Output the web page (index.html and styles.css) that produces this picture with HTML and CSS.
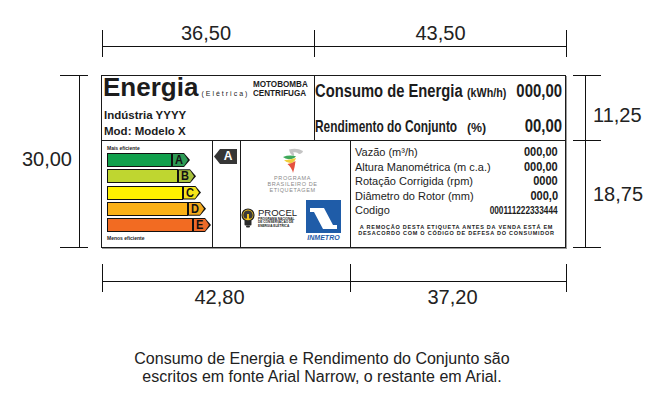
FILE: index.html
```html
<!DOCTYPE html>
<html lang="pt-BR">
<head>
<meta charset="utf-8">
<title>Etiqueta de Eficiência Energética - Motobomba</title>
<link rel="stylesheet" href="styles.css">
</head>
<body>
<div class="page">
  <div class="dim-top">
    <div class="hseg hseg-a"><div class="dim">36,50</div><div class="rule"></div></div>
    <div class="hseg hseg-b"><div class="dim">43,50</div><div class="rule"></div></div>
  </div>

  <div class="mid">
    <div class="vdim-left">
      <div class="dim">30,00</div>
      <div class="vbar"><div class="vline"></div></div>
    </div>

    <div class="etq">
      <div class="etq-top">
        <div class="etq-id">
          <div class="brand"><span class="energia">Energia</span><span class="eletrica">(Elétrica)</span><span class="tipo">MOTOBOMBA<br>CENTRIFUGA</span></div>
          <div class="idline idline-first">Indústria YYYY</div>
          <div class="idline">Mod: Modelo X</div>
        </div>
        <div class="etq-cons">
          <div class="cons-row">
            <span class="cons-lbl lbl-cons">Consumo de Energia</span>
            <span class="cons-unit unit-kwh">(kWh/h)</span>
            <span class="cons-val">000,00</span>
          </div>
          <div class="cons-row">
            <span class="cons-lbl lbl-rend">Rendimento do Conjunto</span>
            <span class="cons-unit unit-pct">(%)</span>
            <span class="cons-val">00,00</span>
          </div>
        </div>
      </div>

      <div class="etq-bot">
        <div class="bars">
          <div class="scale-note">Mais eficiente</div>
          <div class="bar"><div class="bar-body c-a" style="width:65px"></div><div class="tag"><div class="tag-in t-a"><span>A</span></div></div></div>
          <div class="bar"><div class="bar-body c-b" style="width:71px"></div><div class="tag"><div class="tag-in t-b"><span>B</span></div></div></div>
          <div class="bar"><div class="bar-body c-c" style="width:76px"></div><div class="tag"><div class="tag-in t-c"><span>C</span></div></div></div>
          <div class="bar"><div class="bar-body c-d" style="width:81px"></div><div class="tag"><div class="tag-in t-d"><span>D</span></div></div></div>
          <div class="bar"><div class="bar-body c-e" style="width:86px"></div><div class="tag"><div class="tag-in t-e"><span>E</span></div></div></div>
          <div class="scale-note scale-note-low">Menos eficiente</div>
        </div>

        <div class="aind"><div class="arrow-a">A</div></div>

        <div class="logos">
          <div class="pbe">
            <svg class="pbe-mark" width="26" height="26" viewBox="0 0 26 26">
              <path d="M9 1.5 Q17 -0.5 23 3 Q22.5 5.5 19 6 Q17 3.5 13 4.5 Q15 6.5 13.5 8 Q10 6.5 9 1.5Z" fill="#c4c4c4"/>
              <path d="M3 9 Q9 6.5 16 8.2 Q14 11 9 11.2 Q5 11 3 9Z" fill="#3ea85a"/>
              <path d="M4 12.2 Q10 11.8 16 10 Q15 14 11 15.3 Q7 15 4 12.2Z" fill="#f0cf3c"/>
              <path d="M7.5 16 Q12 15.6 15.5 13 Q15 18.5 13 25 Q12 20 7.5 16Z" fill="#e5513d"/>
            </svg>
            <div class="pbe-text">PROGRAMA<br>BRASILEIRO DE<br>ETIQUETAGEM</div>
          </div>
          <div class="seals">
            <div class="procel">
              <svg class="bulb" width="14" height="20" viewBox="0 0 14 20">
                <circle cx="7" cy="7" r="6" fill="#f4c51c" stroke="#222" stroke-width="1.2"/>
                <path d="M7 2.5 A4.5 4.5 0 0 0 4 10.5 L6 10.5 L6 6 L8 6 L8 10.5 L10 10.5 A4.5 4.5 0 0 0 7 2.5Z" fill="#3a3a3a"/>
                <rect x="3.5" y="12.5" width="7" height="5" rx="1" fill="#2a2a2a"/>
                <rect x="5" y="17.5" width="4" height="2" rx="1" fill="#2a2a2a"/>
              </svg>
              <div class="procel-txt">
                <div class="procel-name">PROCEL</div>
                <div class="procel-sub">PROGRAMA NACIONAL<br>DE CONSERVAÇÃO DE<br>ENERGIA ELÉTRICA</div>
              </div>
            </div>
            <div class="inmetro">
              <svg width="35" height="33" viewBox="0 0 35 33">
                <rect width="35" height="33" fill="#1f5ca8"/>
                <polygon points="4,8 18,8 27,25 31,25 31,29 17,29 8,12 4,12" fill="#fff"/>
              </svg>
              <div class="inmetro-text">INMETRO</div>
            </div>
          </div>
        </div>

        <div class="data">
          <div class="drow"><span>Vazão (m³/h)</span><span class="dval">000,00</span></div>
          <div class="drow"><span>Altura Manométrica (m c.a.)</span><span class="dval">000,00</span></div>
          <div class="drow"><span>Rotação Corrigida (rpm)</span><span class="dval">0000</span></div>
          <div class="drow"><span>Diâmetro do Rotor (mm)</span><span class="dval">000,0</span></div>
          <div class="drow"><span>Codigo</span><span class="dval code">000111222333444</span></div>
          <div class="notice">A REMOÇÃO DESTA ETIQUETA ANTES DA VENDA ESTÁ EM<br>DESACORDO COM O CÓDIGO DE DEFESA DO CONSUMIDOR</div>
        </div>
      </div>
    </div>

    <div class="vdim-right">
      <div class="vseg vseg-a"><div class="vtick"><div class="vline"></div></div><div class="dim">11,25</div></div>
      <div class="vseg vseg-b"><div class="vtick"><div class="vline"></div></div><div class="dim">18,75</div></div>
    </div>
  </div>

  <div class="dim-bottom">
    <div class="bseg bseg-a"><div class="rule"></div><div class="dim">42,80</div></div>
    <div class="bseg bseg-b"><div class="rule"></div><div class="dim">37,20</div></div>
  </div>

  <p class="caption">Consumo de Energia e Rendimento do Conjunto são<br>escritos em fonte Arial Narrow, o restante em Arial.</p>
</div>
</body>
</html>
```

FILE: styles.css
```css
* { box-sizing: border-box; margin: 0; padding: 0; }
html, body { width: 659px; height: 400px; background: #fff; }
body {
  font-family: "Liberation Sans", Arial, sans-serif;
  color: #1c1c1c;
  overflow: hidden;
}
.page { width: 659px; height: 400px; display: flex; flex-direction: column; }

/* dimension annotations */
.dim { font-size: 20px; line-height: 20px; color: #222; white-space: nowrap; }

.dim-top { display: flex; height: 75px; padding: 30px 0 0 102px; }
.hseg { height: 27px; border-left: 1px solid #111; display: flex; flex-direction: column; }
.hseg-a { width: 212px; }
.hseg-b { width: 253px; border-right: 1px solid #111; }
.hseg .dim { margin-top: -7px; height: 20px; text-align: center; }
.hseg-a .dim { padding-right: 5px; }
.hseg .rule { height: 4px; border-bottom: 1px solid #111; }

.mid { display: flex; height: 173px; }

.vdim-left { width: 101px; display: flex; align-items: center; flex-shrink: 0; }
.vdim-left .dim { width: 72px; text-align: right; padding-bottom: 6px; }
.vbar {
  width: 28px; align-self: stretch; margin-left: -12px;
  border-top: 1px solid #111; border-bottom: 1px solid #111;
}
.vbar .vline { width: 20px; height: 100%; border-right: 1px solid #111; }

.vdim-right { margin-left: 7px; display: flex; flex-direction: column; }
.vseg { display: flex; align-items: center; }
.vseg-a { height: 65px; }
.vseg-b { height: 108px; }
.vtick { width: 28px; align-self: stretch; border-top: 1px solid #111; padding-left: 12px; }
.vseg-b .vtick { border-bottom: 1px solid #111; }
.vtick .vline { height: 100%; border-left: 1px solid #111; }
.vseg .dim { margin-left: -8px; }
.vseg-a .dim { margin-top: 15px; }

.dim-bottom { display: flex; height: 44px; padding: 16px 0 0 102px; }
.bseg { height: 28px; border-left: 1px solid #111; }
.bseg-a { width: 248px; }
.bseg-b { width: 217px; border-right: 1px solid #111; }
.bseg .rule { height: 18px; border-bottom: 1px solid #111; }
.bseg .dim { margin-top: 4.5px; text-align: center; }
.bseg-a .dim { padding-right: 14px; }
.bseg-b .dim { padding-right: 12px; }

.caption {
  margin-top: 57.5px; padding-right: 15px;
  text-align: center; font-size: 16px; line-height: 18px; color: #222;
}

/* energy label */
.etq {
  width: 465px; height: 173px; flex-shrink: 0;
  border: 1px solid #1a1a1a; box-shadow: 1px 1px 0 #9a9a9a;
  display: flex; flex-direction: column;
}
.etq-top { height: 65px; border-bottom: 1px solid #1a1a1a; display: flex; flex-shrink: 0; }
.etq-id { width: 213px; border-right: 1px solid #1a1a1a; padding-left: 2px; }
.brand { height: 22px; line-height: 22px; white-space: nowrap; }
.energia { font-size: 26px; font-weight: 700; margin-left: -1px; }
.eletrica { font-size: 7px; letter-spacing: 2px; margin-left: 3px; }
.tipo {
  display: inline-block; margin-left: 4px;
  font-weight: 700; font-size: 9px; line-height: 9px;
  transform: scaleX(0.9); transform-origin: 0 50%;
}
.idline { font-size: 11.5px; font-weight: 700; line-height: 16px; }
.idline-first { margin-top: 9px; }

/* Arial Narrow look: Liberation Sans condensed with scaleX */
.etq-cons {
  flex: 1; padding: 5px 4px 0 0;
  display: flex; flex-direction: column; gap: 15px;
  font-weight: 700;
}
.cons-row {
  display: flex; align-items: baseline;
  height: 20px; line-height: 20px; font-size: 18px; white-space: nowrap;
}
.cons-lbl { transform-origin: 0 50%; }
.lbl-cons { width: 148px; transform: scaleX(0.82); }
.lbl-rend { width: 142px; transform: scaleX(0.7); font-size: 17px; }
.cons-unit { font-size: 12.5px; transform-origin: 0 50%; }
.unit-kwh { margin-left: 4px; width: 40px; transform: scaleX(0.86); }
.unit-pct { margin-left: 10px; width: 23px; font-size: 13px; transform: scaleX(0.95); }
.cons-val { margin-left: auto; transform: scaleX(0.83); transform-origin: 100% 50%; }

.etq-bot { flex: 1; display: flex; }

.bars { width: 111px; border-right: 1px solid #1a1a1a; padding: 3px 0 0 5px; flex-shrink: 0; }
.scale-note { font-size: 5px; font-weight: 700; line-height: 8px; height: 8px; margin-bottom: 1px; white-space: nowrap; }
.scale-note-low { margin: 1.75px 0 0; }
.bar { display: flex; height: 14px; margin-bottom: 2.25px; }
.bar:nth-last-child(2) { margin-bottom: 0; }
.bar-body { height: 14px; border: 1px solid #111; }
.c-a { background: #11a04c; }
.c-b { background: #bfd630; }
.c-c { background: #fff200; }
.c-d { background: #fbb117; }
.c-e { background: #f26b22; }
.tag {
  width: 18px; height: 14px; padding: 1px; background: #111;
  clip-path: polygon(0 0, 12px 0, 100% 50%, 12px 100%, 0 100%);
}
.tag-in {
  width: 15px; height: 12px; padding-left: 1.5px;
  clip-path: polygon(0 0, 11px 0, 100% 50%, 11px 100%, 0 100%);
  font-weight: 700; font-size: 13px; line-height: 12.5px; color: #111;
}
.tag-in span { display: inline-block; transform: scaleX(0.85); transform-origin: 0 50%; }
.t-a { background: #2f9b55; }
.t-b { background: #a9c23c; }
.t-c { background: #f6e41a; }
.t-d { background: #f4aa1e; }
.t-e { background: #ec6a2a; }

.aind { width: 28px; border-right: 1px solid #1a1a1a; padding: 8px 0 0 1px; flex-shrink: 0; }
.arrow-a {
  width: 23px; height: 15px; padding-left: 5px;
  background: #363636; color: #fff;
  clip-path: polygon(0 50%, 6px 0, 100% 0, 100% 100%, 6px 100%);
  font-weight: 700; font-size: 12px; line-height: 15px; text-align: center;
}

.logos { width: 110px; border-right: 1px solid #1a1a1a; display: flex; flex-direction: column; padding-top: 7px; flex-shrink: 0; }
.pbe { display: flex; flex-direction: column; align-items: center; padding-right: 6px; }
.pbe-mark { display: block; }
.pbe-text {
  margin-top: 1px; font-size: 5.5px; line-height: 6px; letter-spacing: 0.6px;
  color: #8a8a8a; text-align: center; white-space: nowrap;
}
.seals { display: flex; justify-content: space-between; align-items: flex-start; margin-top: 7px; padding-right: 9px; }
.procel { display: flex; gap: 3px; margin-top: 8px; }
.bulb { display: block; }
.procel-name { font-size: 9.5px; line-height: 10px; color: #222; }
.procel-sub { font-size: 3.2px; line-height: 3.3px; font-weight: 700; white-space: nowrap; }
.inmetro { width: 35px; display: flex; flex-direction: column; align-items: center; }
.inmetro svg { display: block; }
.inmetro-text { font-size: 7px; line-height: 9px; font-weight: 700; font-style: italic; color: #1f5ca8; }

.data { flex: 1; padding: 4px 7px 0 4px; }
.drow {
  display: flex; justify-content: space-between; align-items: baseline;
  font-size: 11px; line-height: 14.5px; white-space: nowrap;
}
.dval {
  font-weight: 700; font-size: 12px;
  transform: scaleX(0.92); transform-origin: 100% 50%;
}
.dval.code { font-size: 11px; transform: scaleX(0.75); }
.notice {
  margin-top: 6px; font-size: 5.5px; line-height: 6px; font-weight: 700;
  text-align: center; letter-spacing: 0.75px; white-space: nowrap;
}
```
